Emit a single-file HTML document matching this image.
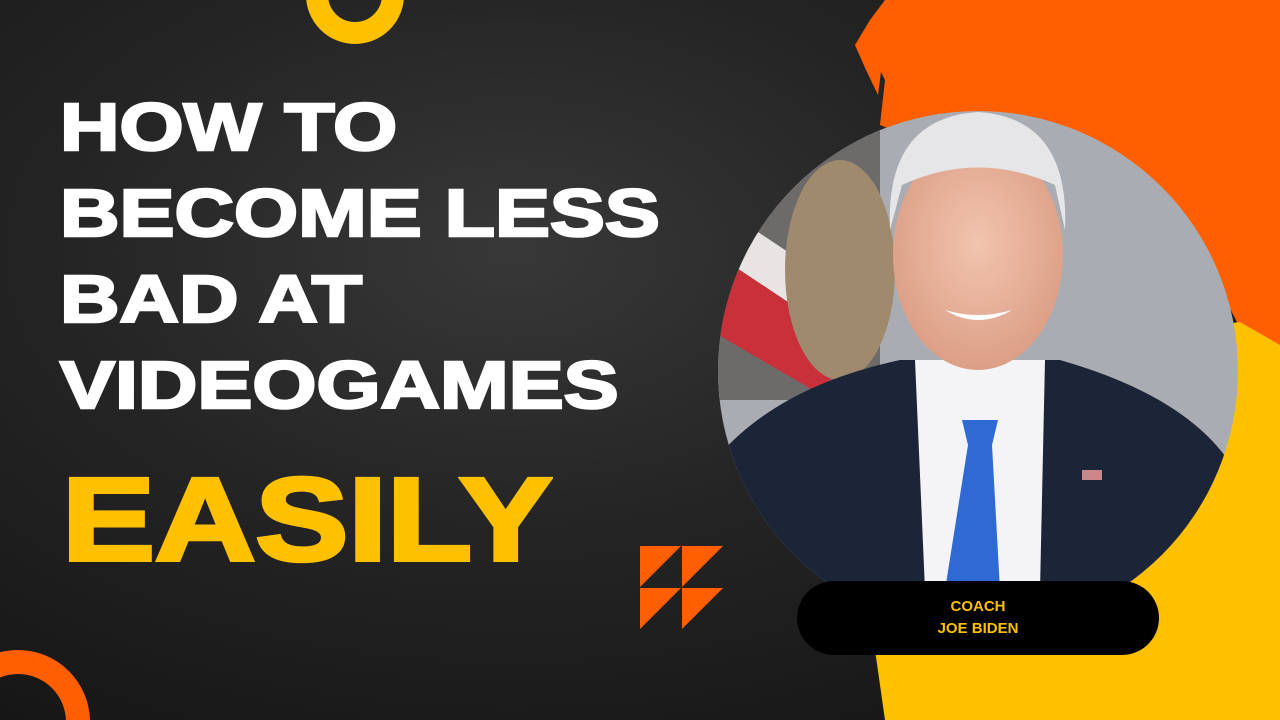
<!DOCTYPE html>
<html><head><meta charset="utf-8"><style>
html,body{margin:0;width:1280px;height:720px;overflow:hidden}
body{background:#1c1c1c;position:relative;font-family:"Liberation Sans",sans-serif}
.bg{position:absolute;inset:0;background:radial-gradient(ellipse at 40% 35%,#383838 0%,#252525 40%,#111 100%)}
.t{position:absolute;left:60px;color:#fff;font-weight:bold;font-size:67px;line-height:86px;top:85px;transform-origin:0 0;transform:scaleX(1.23);white-space:nowrap;-webkit-text-stroke:2.5px #fff}
.e{position:absolute;left:62px;top:455px;color:#ffc000;font-weight:bold;font-size:118px;line-height:130px;transform-origin:0 0;transform:scaleX(1.18);white-space:nowrap;-webkit-text-stroke:4px #ffc000}
.pill{position:absolute;left:797px;top:581px;width:362px;height:74px;background:#000;border-radius:37px;color:#ffc000;font-weight:bold;font-size:15px;text-align:center;line-height:22px;padding-top:15px;box-sizing:border-box}
</style></head><body>
<div class="bg"></div>
<svg width="1280" height="720" style="position:absolute;left:0;top:0">
<path d="M900 0 L1280 0 L1280 345 L1240 328 L1200 250 L880 125 L885 80 L870 50 Z" fill="#ff5f00"/>
<path d="M855 45 L870 20 L885 0 L900 0 L885 40 L878 95 L866 70 Z" fill="#ff5f00"/>
<path d="M1180 330 L1240 322 L1280 345 L1280 720 L885 720 L875 650 L1100 600 L1200 480 Z" fill="#ffc000"/>
<circle cx="355" cy="-5" r="38" fill="none" stroke="#ffc000" stroke-width="22"/>
<circle cx="18" cy="722" r="60" fill="none" stroke="#ff5f00" stroke-width="24"/>
<g fill="#ff5f00"><polygon points="640,546 681,546 640,587"/><polygon points="682,546 723,546 682,587"/><polygon points="640,588 681,588 640,629"/><polygon points="682,588 723,588 682,629"/></g>
<defs><clipPath id="c"><circle cx="978" cy="371" r="260"/></clipPath>
<radialGradient id="f" cx=".5" cy=".45" r=".55"><stop offset="0" stop-color="#f2c4ae"/><stop offset="1" stop-color="#dc9f86"/></radialGradient></defs>
<g clip-path="url(#c)">
<rect x="700" y="100" width="560" height="490" fill="#a9adb3"/>
<rect x="700" y="100" width="180" height="300" fill="#6d6a6a"/>
<path d="M710 250 L830 330 L830 400 L710 330Z" fill="#c9303a"/>
<path d="M710 200 L830 280 L830 330 L710 250Z" fill="#e8e4e4"/>
<ellipse cx="840" cy="270" rx="55" ry="110" fill="#a08a6e"/>
<path d="M700 480 Q760 390 900 360 L1060 360 Q1200 400 1240 480 L1240 590 L700 590Z" fill="#1c2538"/>
<path d="M915 360 L1045 360 L1040 590 L925 590Z" fill="#f4f4f6"/>
<path d="M962 420 L998 420 L992 445 L1000 590 L945 590 L968 445Z" fill="#2f6ad4"/>
<ellipse cx="978" cy="255" rx="85" ry="115" fill="url(#f)"/>
<path d="M890 230 Q885 118 978 112 Q1070 118 1065 230 L1055 185 Q978 150 902 185Z" fill="#e6e6e8"/>
<path d="M945 310 Q978 330 1012 310 Q978 320 945 310Z" fill="#fff"/>
<rect x="1082" y="470" width="20" height="10" fill="#c88"/>
</g>
</svg>
<div class="t">HOW TO<br>BECOME LESS<br>BAD AT<br>VIDEOGAMES</div>
<div class="e">EASILY</div>
<div class="pill">COACH<br>JOE BIDEN</div>
</body></html>
